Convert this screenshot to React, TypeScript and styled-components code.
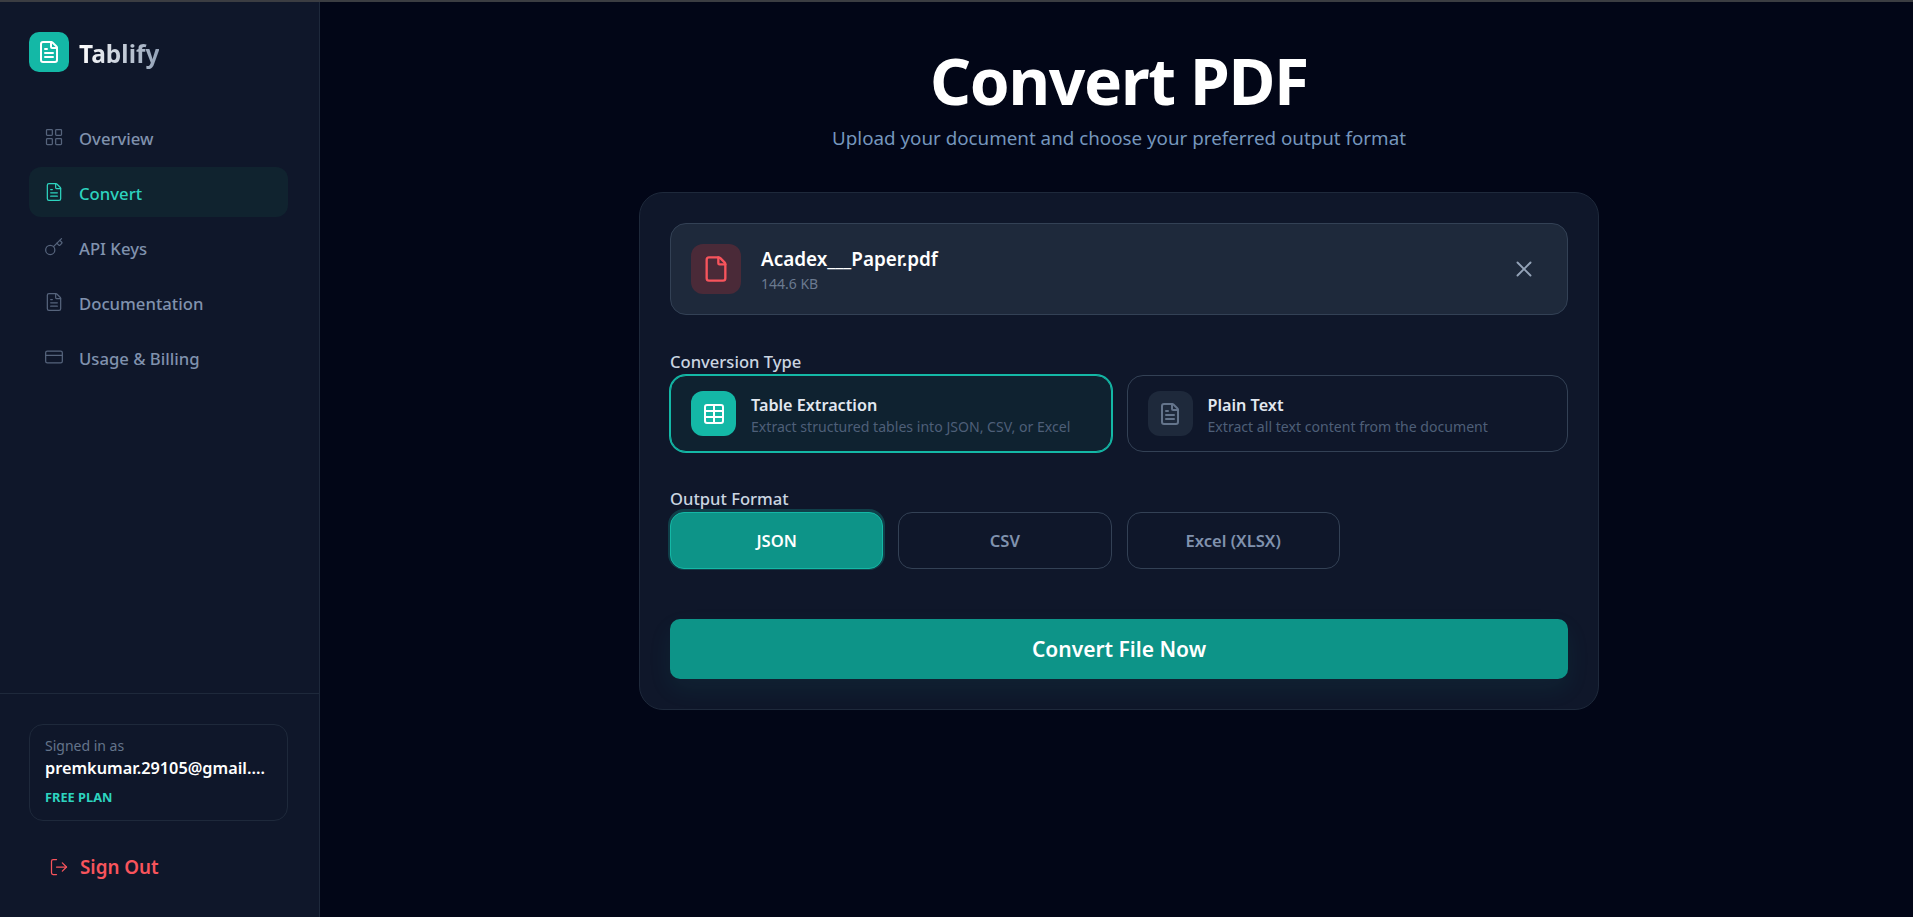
import styled, { createGlobalStyle } from 'styled-components';
import {
  CreditCard,
  File,
  FileText,
  Key,
  LayoutGrid,
  LogOut,
  Table,
  X,
} from 'lucide-react';

const GlobalStyle = createGlobalStyle`
  * {
    box-sizing: border-box;
  }

  body {
    margin: 0;
    background: #020617;
    font-family: 'Noto Sans', 'Open Sans', sans-serif;
    overflow: hidden;
  }
`;

const navItems = [
  { label: 'Overview', icon: LayoutGrid },
  { label: 'Convert', icon: FileText, active: true },
  { label: 'API Keys', icon: Key },
  { label: 'Documentation', icon: FileText },
  { label: 'Usage & Billing', icon: CreditCard },
];

export default function App() {
  return (
    <Page>
      <GlobalStyle />
      <Sidebar>
        <Brand>
          <BrandMark>
            <FileText size={24} strokeWidth={2} />
          </BrandMark>
          <BrandName>Tablify</BrandName>
        </Brand>
        <Nav>
          {navItems.map((item) => (
            <NavItem key={item.label} $active={item.active}>
              <item.icon size={20} strokeWidth={1.5} />
              <NavLabel>{item.label}</NavLabel>
            </NavItem>
          ))}
        </Nav>
        <SidebarFooter>
          <AccountCard>
            <SignedIn>Signed in as</SignedIn>
            <Email>premkumar.29105@gmail.com</Email>
            <Plan>FREE PLAN</Plan>
          </AccountCard>
          <SignOut>
            <LogOut size={20} strokeWidth={1.5} />
            Sign Out
          </SignOut>
        </SidebarFooter>
      </Sidebar>
      <Main>
        <Title>Convert PDF</Title>
        <Subtitle>Upload your document and choose your preferred output format</Subtitle>
        <Card>
          <FileRow>
            <FileIcon>
              <File size={28} strokeWidth={2} />
            </FileIcon>
            <FileInfo>
              <FileName>Acadex___Paper.pdf</FileName>
              <FileSize>144.6 KB</FileSize>
            </FileInfo>
            <RemoveButton>
              <X size={26} strokeWidth={1.75} />
            </RemoveButton>
          </FileRow>

          <Section $top={35}>
            <Label>Conversion Type</Label>
            <OptionGrid>
              <Option $selected>
                <OptionIcon $selected>
                  <Table size={24} strokeWidth={2} />
                </OptionIcon>
                <OptionBody>
                  <OptionTitle>Table Extraction</OptionTitle>
                  <OptionText>Extract structured tables into JSON, CSV, or Excel</OptionText>
                </OptionBody>
              </Option>
              <Option>
                <OptionIcon>
                  <FileText size={24} strokeWidth={2} />
                </OptionIcon>
                <OptionBody>
                  <OptionTitle>Plain Text</OptionTitle>
                  <OptionText>Extract all text content from the document</OptionText>
                </OptionBody>
              </Option>
            </OptionGrid>
          </Section>

          <Section $top={35}>
            <Label>Output Format</Label>
            <FormatGrid>
              <FormatButton $selected>JSON</FormatButton>
              <FormatButton>CSV</FormatButton>
              <FormatButton>Excel (XLSX)</FormatButton>
            </FormatGrid>
          </Section>

          <ConvertButton>Convert File Now</ConvertButton>
        </Card>
      </Main>
    </Page>
  );
}

const Page = styled.div`
  display: flex;
  height: 917px;
  border-top: 2px solid #3b3d42;
  background: #020617;
`;

const Sidebar = styled.aside`
  width: 320px;
  flex-shrink: 0;
  display: flex;
  flex-direction: column;
  background: #0f172a;
  border-right: 1px solid #1e293b;
`;

const Brand = styled.div`
  display: flex;
  align-items: center;
  gap: 10px;
  padding: 30px 29px 0;
`;

const BrandMark = styled.div`
  width: 40px;
  height: 40px;
  border-radius: 10px;
  display: flex;
  align-items: center;
  justify-content: center;
  background: #14b8a6;
  color: #fff;
`;

const BrandName = styled.span`
  margin-top: 2px;
  font-size: 24.5px;
  font-weight: 700;
  background: linear-gradient(90deg, #ffffff, #94a3b8);
  -webkit-background-clip: text;
  background-clip: text;
  color: transparent;
`;

const Nav = styled.nav`
  display: flex;
  flex-direction: column;
  gap: 5px;
  margin-top: 40px;
  padding: 0 31px 0 29px;
`;

const NavItem = styled.a<{ $active?: boolean }>`
  height: 50px;
  display: flex;
  align-items: center;
  gap: 15px;
  padding-left: 15px;
  border-radius: 12px;
  font-size: 16.7px;
  font-weight: 500;
  color: ${(props) => (props.$active ? '#2dd4bf' : '#8092ae')};
  background: ${(props) => (props.$active ? '#10232f' : 'transparent')};

  svg {
    color: ${(props) => (props.$active ? '#2dd4bf' : '#56647c')};
  }
`;

const NavLabel = styled.span`
  margin-top: 2px;
`;

const SidebarFooter = styled.div`
  margin-top: auto;
  padding: 30px 31px 25px 29px;
  border-top: 1px solid #1e293b;
`;

const AccountCard = styled.div`
  height: 97px;
  padding: 12px 16px 12px 15px;
  border: 1px solid #1e293b;
  border-radius: 14px;
`;

const SignedIn = styled.div`
  font-size: 14px;
  line-height: 18px;
  color: #64748b;
`;

const Email = styled.div`
  margin-top: 1px;
  font-size: 16.3px;
  line-height: 24px;
  font-weight: 600;
  color: #fff;
  white-space: nowrap;
  overflow: hidden;
  text-overflow: ellipsis;
`;

const Plan = styled.div`
  margin-top: 9px;
  font-size: 12.8px;
  line-height: 16px;
  font-weight: 700;
  color: #2dd4bf;
`;

const SignOut = styled.a`
  height: 50px;
  margin-top: 21px;
  display: flex;
  align-items: center;
  gap: 11px;
  padding-left: 20px;
  font-size: 18.8px;
  font-weight: 600;
  color: #f8545c;
`;

const Main = styled.main`
  flex: 1;
  display: flex;
  flex-direction: column;
  align-items: center;
  padding: 39px 0 0 5px;
`;

const Title = styled.h1`
  margin: 0;
  font-size: 64px;
  letter-spacing: -1.3px;
  line-height: 80px;
  font-weight: 700;
  color: #fff;
`;

const Subtitle = styled.p`
  margin: 5px 0 0;
  font-size: 18.8px;
  line-height: 24px;
  color: #7596bd;
`;

const Card = styled.section`
  width: 960px;
  margin-top: 42px;
  padding: 30px;
  background: #0f172a;
  border: 1px solid #1e293b;
  border-radius: 24px;
`;

const FileRow = styled.div`
  height: 92px;
  display: flex;
  align-items: center;
  gap: 20px;
  padding: 0 20px;
  background: #1e293b;
  border: 1px solid #334155;
  border-radius: 16px;
`;

const FileIcon = styled.div`
  width: 50px;
  height: 50px;
  border-radius: 12px;
  display: flex;
  align-items: center;
  justify-content: center;
  background: #4a2a38;
  color: #f8545c;
`;

const FileInfo = styled.div`
  flex: 1;
  padding-top: 2px;
`;

const FileName = styled.div`
  font-size: 18.9px;
  line-height: 26px;
  font-weight: 600;
  color: #fff;
`;

const FileSize = styled.div`
  margin-top: 2px;
  font-size: 14px;
  line-height: 20px;
  color: #6b7a90;
`;

const RemoveButton = styled.div`
  width: 40px;
  height: 40px;
  margin-right: 3px;
  display: flex;
  align-items: center;
  justify-content: center;
  color: #94a3b8;
`;

const Section = styled.div<{ $top: number }>`
  margin-top: ${(props) => props.$top}px;
`;

const Label = styled.div`
  height: 24px;
  margin-bottom: 1px;
  font-size: 16.6px;
  line-height: 24px;
  font-weight: 500;
  color: #cbd5e1;
`;

const OptionGrid = styled.div`
  display: grid;
  grid-template-columns: 1fr 1fr;
  gap: 15px;
`;

const Option = styled.div<{ $selected?: boolean }>`
  height: 77px;
  display: flex;
  align-items: center;
  gap: 15px;
  padding: 0 20px;
  border: 1px solid ${(props) => (props.$selected ? '#14b8a6' : '#334155')};
  border-radius: 16px;
  background: ${(props) => (props.$selected ? '#0f2230' : 'transparent')};
  box-shadow: ${(props) => (props.$selected ? '0 0 0 1px #14b8a6' : 'none')};
`;

const OptionIcon = styled.div<{ $selected?: boolean }>`
  width: 45px;
  height: 45px;
  flex-shrink: 0;
  border-radius: 12px;
  display: flex;
  align-items: center;
  justify-content: center;
  background: ${(props) => (props.$selected ? '#14b8a6' : '#1e293b')};
  color: ${(props) => (props.$selected ? '#fff' : '#64748b')};
`;

const OptionBody = styled.div`
  padding-top: 3px;
`;

const OptionTitle = styled.div`
  font-size: 16.2px;
  line-height: 22px;
  font-weight: 600;
  color: #e2e8f0;
`;

const OptionText = styled.div`
  margin-top: 1px;
  font-size: 14.1px;
  line-height: 20px;
  color: #4e5f78;
`;

const FormatGrid = styled.div`
  display: grid;
  grid-template-columns: repeat(4, 1fr);
  gap: 15px;
`;

const FormatButton = styled.div<{ $selected?: boolean }>`
  height: 57px;
  display: flex;
  align-items: center;
  justify-content: center;
  border: 1px solid ${(props) => (props.$selected ? '#14b8a6' : '#334155')};
  border-radius: 14px;
  font-size: 16.6px;
  font-weight: 600;
  color: ${(props) => (props.$selected ? '#fff' : '#8092ae')};
  background: ${(props) => (props.$selected ? '#0d9488' : 'transparent')};
  box-shadow: ${(props) =>
    props.$selected ? '0 -1px 0 2px rgba(20, 184, 166, 0.25)' : 'none'};
`;

const ConvertButton = styled.div`
  height: 60px;
  margin-top: 50px;
  display: flex;
  align-items: center;
  justify-content: center;
  border-radius: 10px;
  font-size: 21px;
  font-weight: 600;
  color: #fff;
  background: #0d9488;
  box-shadow: 0 10px 25px rgba(20, 184, 166, 0.08);
`;
